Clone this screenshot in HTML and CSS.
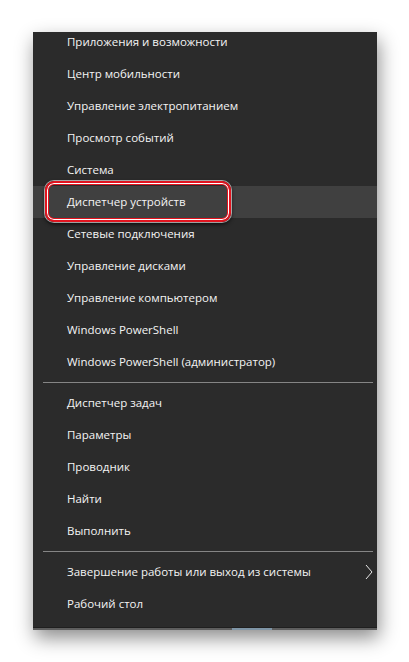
FILE: index.html
```html
<!DOCTYPE html>
<html lang="ru">
<head>
<meta charset="utf-8">
<link rel="stylesheet" href="styles.css">
</head>
<body>
<div class="page">
  <div class="menu">
    <div class="list">
      <div class="item">Приложения и возможности</div>
      <div class="item">Центр мобильности</div>
      <div class="item">Управление электропитанием</div>
      <div class="item">Просмотр событий</div>
      <div class="item">Система</div>
      <div class="item active">Диспетчер устройств<span class="mark"></span></div>
      <div class="item">Сетевые подключения</div>
      <div class="item">Управление дисками</div>
      <div class="item">Управление компьютером</div>
      <div class="item">Windows PowerShell</div>
      <div class="item">Windows PowerShell (администратор)</div>
      <div class="sep"></div>
      <div class="item">Диспетчер задач</div>
      <div class="item">Параметры</div>
      <div class="item">Проводник</div>
      <div class="item">Найти</div>
      <div class="item">Выполнить</div>
      <div class="sep"></div>
      <div class="item sub">Завершение работы или выход из системы
        <svg class="chev" width="8" height="16" viewBox="0 0 8 16"><path d="M1 1 L7 8 L1 15" fill="none" stroke="#e8e8e8" stroke-width="1"/></svg>
      </div>
      <div class="item">Рабочий стол</div>
    </div>
    <div class="bottom"><span class="blue"></span></div>
  </div>
</div>
</body>
</html>
```
FILE: styles.css
```css
html, body {
  margin: 0;
  padding: 0;
  background: #ffffff;
}
.page {
  width: 409px;
  height: 662px;
  padding: 32px 0 0 33px;
  box-sizing: border-box;
  overflow: hidden;
}
.menu {
  width: 344px;
  background: #2b2b2b;
  box-shadow: 2px 8px 18px rgba(0, 0, 0, 0.45);
  font-family: "Open Sans", "Noto Sans", sans-serif;
  font-size: 11.5px;
  color: #f4f4f4;
}
.list {
  padding-bottom: 7px;
  position: relative;
}
.item {
  height: 32px;
  line-height: 32px;
  padding-left: 34px;
  position: relative;
  white-space: nowrap;
}
.item:first-child {
  height: 26px;
  line-height: 20px;
}
.item.active {
  background: #404040;
}
.mark {
  position: absolute;
  left: 12px;
  top: -5px;
  width: 186px;
  height: 41px;
  box-sizing: border-box;
  border: 2px solid #e1141f;
  border-radius: 9px;
  box-shadow: inset 0 0 0 1px #ffffff, inset 0 0 0 2px #e1141f, 0 0 0 1px rgba(255,255,255,0.6), 0 2px 4px rgba(0, 0, 0, 0.8);
}
.sep {
  height: 9px;
  margin: 0 4px 0 10px;
  display: flex;
  align-items: center;
}
.sep::before {
  content: "";
  display: block;
  width: 100%;
  height: 1px;
  background: #858585;
}
.chev {
  position: absolute;
  right: 4px;
  top: 8px;
}
.bottom {
  height: 2px;
  background: #5e5e5e;
  border-top: 1px solid #1f1f1f;
  position: relative;
}
.blue {
  position: absolute;
  left: 199px;
  top: 0;
  width: 40px;
  height: 2px;
  background: #7f95a6;
}
```
